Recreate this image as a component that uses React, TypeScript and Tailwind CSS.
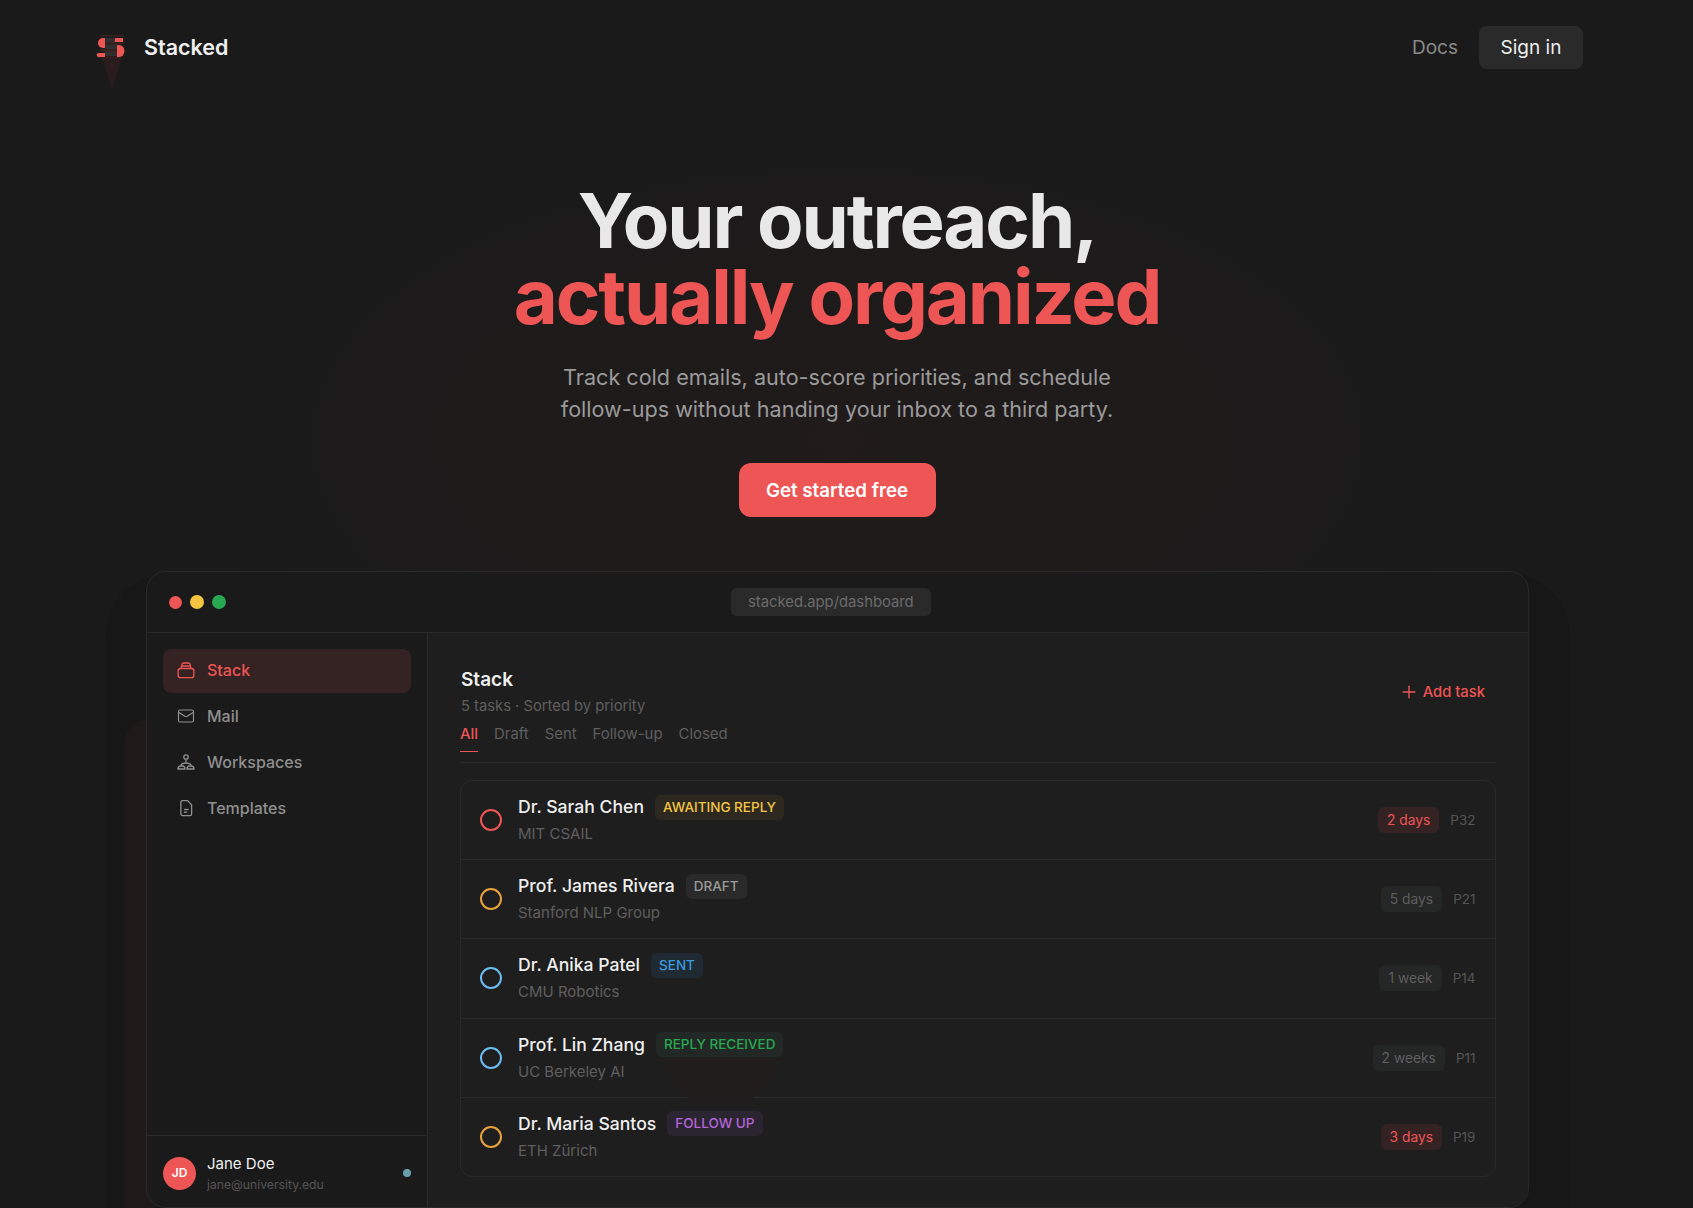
import { Mail, Plus } from "lucide-react";

const font = { fontFamily: "Inter, sans-serif" };

const navItems = [
  { label: "Stack", active: true },
  { label: "Mail", active: false },
  { label: "Workspaces", active: false },
  { label: "Templates", active: false },
];

const tasks = [
  { name: "Dr. Sarah Chen", org: "MIT CSAIL", tag: "AWAITING REPLY", tagClass: "bg-[#2d2920] text-[#f5c542]", ring: "border-[#ee5555]", due: "2 days", dueClass: "bg-[#352323] text-[#ee5555]", score: "P32" },
  { name: "Prof. James Rivera", org: "Stanford NLP Group", tag: "DRAFT", tagClass: "bg-[#2a2a2a] text-[#9a9a9a]", ring: "border-[#e9a23b]", due: "5 days", dueClass: "bg-[#252626] text-[#5f5f5f]", score: "P21" },
  { name: "Dr. Anika Patel", org: "CMU Robotics", tag: "SENT", tagClass: "bg-[#1f2a32] text-[#3b9ae0]", ring: "border-[#6bbcf0]", due: "1 week", dueClass: "bg-[#252626] text-[#5f5f5f]", score: "P14" },
  { name: "Prof. Lin Zhang", org: "UC Berkeley AI", tag: "REPLY RECEIVED", tagClass: "bg-[#212826] text-[#28a850]", ring: "border-[#6bbcf0]", due: "2 weeks", dueClass: "bg-[#252626] text-[#5f5f5f]", score: "P11" },
  { name: "Dr. Maria Santos", org: "ETH Zürich", tag: "FOLLOW UP", tagClass: "bg-[#2a2530] text-[#b565d8]", ring: "border-[#e9a23b]", due: "3 days", dueClass: "bg-[#352323] text-[#ee5555]", score: "P19" },
];

function Logo() {
  return (
    <svg width="30" height="60" viewBox="0 0 30 60" className="shrink-0">
      <path d="M6 25h20L16 57z" fill="#2a1c1c" />
      <rect x="4" y="2" width="24" height="1.5" fill="#3a2020" />
      <rect x="9" y="5" width="12" height="18" fill="#2f2f2f" />
      <rect x="4" y="9.5" width="24" height="2" fill="#3a1f1f" />
      <rect x="4" y="16" width="17" height="2.5" fill="#3a1f1f" />
      <rect x="6" y="23.5" width="20" height="1.5" fill="#3a1f1f" />
      <path d="M9 5H7a5 5 0 0 0 0 10h2z" fill="#ee5555" />
      <path d="M19 5h8v4h-8z" fill="#ee5555" />
      <path d="M21 12h2a5.5 6 0 0 1 0 12h-2z" fill="#ee5555" />
      <path d="M2 20h7v4H4a2 2 0 0 1-2-4z" fill="#ee5555" />
    </svg>
  );
}

function StackIcon() {
  return (
    <svg width="18" height="18" viewBox="0 0 18 18" fill="none" stroke="currentColor" strokeWidth="1.3">
      <rect x="1.2" y="7.5" width="15.6" height="9.2" rx="2.2" />
      <path d="M4 7.5 5 3.4A1.8 1.8 0 0 1 6.8 2h4.4A1.8 1.8 0 0 1 13 3.4L14 7.5" />
      <path d="M4.6 5h8.8" />
    </svg>
  );
}

function TeamIcon() {
  return (
    <svg width="18" height="18" viewBox="0 0 18 18" fill="none" stroke="currentColor" strokeWidth="1.3">
      <circle cx="9" cy="4" r="2.2" />
      <path d="M9 6.4v3" />
      <path d="M1 16c0-2 1.2-3 2.8-3h1.4C7 13 8 14 8 16z" />
      <path d="M10 16c0-2 1.2-3 2.8-3h1.4c1.8 0 2.8 1 2.8 3z" />
      <path d="M4 13c0-2 1.5-3 5-3s5 1 5 3" />
    </svg>
  );
}

function DocIcon() {
  return (
    <svg width="18" height="18" viewBox="0 0 18 18" fill="none" stroke="currentColor" strokeWidth="1.3">
      <path d="M5.5 1.6h5L14.6 5.7V15a1.6 1.6 0 0 1-1.6 1.6H5.5A1.6 1.6 0 0 1 3.9 15V3.2A1.6 1.6 0 0 1 5.5 1.6z" />
      <path d="M7 10.5h4.8" />
      <path d="M7 13.2h3.2" />
    </svg>
  );
}

function NavIcon({ label }: { label: string }) {
  if (label === "Stack") return <StackIcon />;
  if (label === "Mail") return <Mail size={18} strokeWidth={1.6} />;
  if (label === "Workspaces") return <TeamIcon />;
  return <DocIcon />;
}

function TaskRow({ task, last }: { task: (typeof tasks)[number]; last: boolean }) {
  return (
    <div className={`flex items-center pr-[19.5px] pl-[19px] ${last ? "h-[78.4px]" : "h-[79.2px] border-b border-[#2a2a2a]"}`}>
      <div className={`h-[22px] w-[22px] shrink-0 rounded-full border-2 ${task.ring}`} />
      <div className="ml-[16px] flex-1 pb-px">
        <div className="relative z-10 flex items-center gap-[11px]">
          <span className="text-[17.6px] leading-[26px] font-medium text-[#efefef]">{task.name}</span>
          <span className={`rounded-md px-2 text-[13.5px] leading-[25px] font-medium ${task.tagClass}`}>{task.tag}</span>
        </div>
        <div className="mt-[3px] text-[15px] leading-[22px] text-[#5f5f5f]">{task.org}</div>
      </div>
      <span className={`rounded-md px-[9px] text-[13.8px] leading-[26px] ${task.dueClass}`}>{task.due}</span>
      <span className="ml-[11px] text-[13.5px] text-[#555555]">{task.score}</span>
    </div>
  );
}

export default function App() {
  return (
    <div
      style={font}
      className="relative flex h-[1208px] flex-col overflow-hidden bg-[#1a1a1a] bg-[radial-gradient(ellipse_660px_340px_at_837px_440px,#211b1b_0%,#1a1a1a_100%)]"
    >
      {/* soft shapes behind the window */}
      <div className="absolute top-[575px] left-[106px] h-[700px] w-[1464px] rounded-[60px] bg-[#171717]" />
      <div className="absolute top-[720px] left-[124px] h-[500px] w-[30px] rounded-tl-[24px] bg-[#1f1919]" />

      <header className="relative flex h-[94px] shrink-0 items-start justify-between pt-[26px] pr-[110px] pl-[96px]">
        <div className="flex items-start gap-[18px] pt-[7px]">
          <Logo />
          <span className="mt-[-3px] text-[21.5px] leading-[34px] font-semibold text-[#efefef]">Stacked</span>
        </div>
        <div className="flex items-center gap-[21px]">
          <span className="pt-px text-[19px] text-[#8a8a8a]">Docs</span>
          <button className="h-[43px] w-[104px] rounded-lg bg-[#2a2a2a] pt-px text-[19px] text-[#efefef]">Sign in</button>
        </div>
      </header>

      <section className="relative flex shrink-0 flex-col items-center pr-[19px]">
        <h1 className="mt-[88px] text-center text-[76px] leading-[76px] font-bold tracking-[-0.028em] text-[#e8e8e8]">
          Your outreach,
          <br />
          <span className="text-[#ee5555]">actually organized</span>
        </h1>
        <p className="mt-[27px] text-center text-[21.6px] leading-[32px] text-[#9a9a9a]">
          Track cold emails, auto-score priorities, and schedule
          <br />
          follow-ups without handing your inbox to a third party.
        </p>
        <button className="mt-[38px] h-[54px] w-[197px] rounded-xl bg-[#ee5555] pt-[2px] text-[18.7px] font-semibold text-white">Get started free</button>
      </section>

      <div className="relative mt-[54px] mr-[164px] ml-[146px] flex min-h-0 flex-1 flex-col overflow-hidden rounded-[20px] border border-[#2a2a2a] bg-[#1a1a1a]">
        <div className="relative flex h-[61px] shrink-0 items-center gap-[8px] border-b border-[#2a2a2a] pl-[22px]">
          <span className="h-[13px] w-[13px] rounded-full bg-[#ee5555]" />
          <span className="h-[14px] w-[14px] rounded-full bg-[#f5c542]" />
          <span className="h-[14px] w-[14px] rounded-full bg-[#28a850]" />
          <span className="ml-[497px] rounded-md bg-[#2a2a2a] px-[17px] text-[14.8px] leading-[28px] text-[#6b6b6b]">stacked.app/dashboard</span>
        </div>

        <div className="flex min-h-0 flex-1">
          <aside className="flex w-[281px] shrink-0 flex-col border-r border-[#2a2a2a]">
            <nav className="flex flex-1 flex-col gap-[2px] px-4 pt-4">
              {navItems.map((item) => (
                <div
                  key={item.label}
                  className={`flex h-[44px] items-center gap-[12px] rounded-lg pb-[2px] pl-[14px] text-[16px] font-medium ${item.active ? "bg-[#352222] text-[#ee5555]" : "text-[#8f8f8f]"}`}
                >
                  <NavIcon label={item.label} />
                  {item.label}
                </div>
              ))}
            </nav>
            <div className="flex h-[72px] items-center border-t border-[#2a2a2a] px-4 pt-[3px]">
              <div className="flex h-[33px] w-[33px] items-center justify-center rounded-full bg-[#ee5555] text-[12px] font-semibold text-white">JD</div>
              <div className="mt-[2px] ml-[11px] flex-1">
                <div className="text-[15px] leading-[20px] text-[#efefef]">Jane Doe</div>
                <div className="mt-[2px] text-[12.2px] leading-[18px] text-[#555555]">jane@university.edu</div>
              </div>
              <span className="h-[8px] w-[8px] rounded-full bg-[#6aa0ac]" />
            </div>
          </aside>

          <main className="min-w-0 flex-1 bg-[#1e1e1e] px-[32px] pt-[34px]">
            <div className="flex items-start justify-between">
              <div className="ml-px">
                <h2 className="text-[19px] leading-[26px] font-semibold text-[#efefef]">Stack</h2>
                <p className="mt-px text-[14.75px] leading-[24px] text-[#5f5f5f]">5 tasks · Sorted by priority</p>
              </div>
              <button className="mt-[14px] mr-[11px] flex items-center gap-[4px] text-[14.8px] font-medium text-[#ee5555]">
                <Plus size={20} strokeWidth={1.7} />
                Add task
              </button>
            </div>
            <div className="mt-[4px] flex gap-4 border-b border-[#2a2a2a] pb-[11px] text-[14.9px] text-[#5f5f5f]">
              <span className="-mb-px border-b border-[#ee5555] pb-[5px] leading-[24px] font-medium text-[#ee5555]">All</span>
              <span className="leading-[24px]">Draft</span>
              <span className="leading-[24px]">Sent</span>
              <span className="leading-[24px]">Follow-up</span>
              <span className="leading-[24px]">Closed</span>
            </div>
            <div className="relative mt-[17px] overflow-hidden rounded-xl border border-[#2a2a2a]">
              <svg width="130" height="40" viewBox="0 0 130 40" className="absolute top-[277px] left-[194px]">
                <path d="M0 0h130L98 40H33z" fill="#221d1d" />
              </svg>
              {tasks.map((task, i) => (
                <TaskRow key={task.name} task={task} last={i === tasks.length - 1} />
              ))}
            </div>
          </main>
        </div>
      </div>
    </div>
  );
}
